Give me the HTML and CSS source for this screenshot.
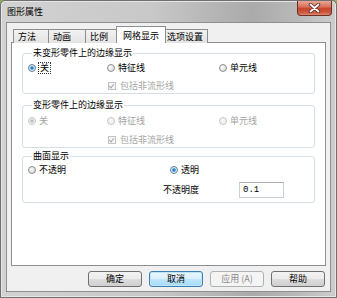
FILE: index.html
```html
<!DOCTYPE html>
<html lang="zh-CN">
<head>
<meta charset="utf-8">
<link rel="stylesheet" href="styles.css">
</head>
<body>
<div class="window">
  <div class="titlebar">
    <span class="title">图形属性</span>
    <span class="close">
      <svg width="13" height="10" viewBox="0 0 13 10"><path d="M2.5 1.5 L10.5 8.5 M10.5 1.5 L2.5 8.5" stroke="#5a2a22" stroke-width="3.4" stroke-linecap="round"/><path d="M2.5 1.5 L10.5 8.5 M10.5 1.5 L2.5 8.5" stroke="#ffffff" stroke-width="1.8" stroke-linecap="round"/></svg>
    </span>
  </div>
  <div class="client">
    <div class="tabs">
      <span class="tab">方法</span>
      <span class="tab t2">动画</span>
      <span class="tab t3">比例</span>
      <span class="tab active">网格显示</span>
      <span class="tab t5">选项设置</span>
    </div>
    <div class="panel">
      <fieldset class="group g1">
        <legend>未变形零件上的边缘显示</legend>
        <div class="opts">
          <label class="opt"><span class="radio checked"></span><span class="focus">关</span></label>
          <label class="opt"><span class="radio"></span>特征线</label>
          <label class="opt"><span class="radio"></span>单元线</label>
          <label class="opt dis chk-cell"><span class="check"></span>包括非流形线</label>
        </div>
      </fieldset>
      <fieldset class="group g2">
        <legend>变形零件上的边缘显示</legend>
        <div class="opts opts2">
          <label class="opt dis"><span class="radio dchecked"></span>关</label>
          <label class="opt dis"><span class="radio dradio"></span>特征线</label>
          <label class="opt dis"><span class="radio dradio"></span>单元线</label>
          <label class="opt dis chk-cell"><span class="check"></span>包括非流形线</label>
        </div>
      </fieldset>
      <fieldset class="group g3">
        <legend>曲面显示</legend>
        <div class="surf-row">
          <label class="opt op1"><span class="radio"></span>不透明</label>
          <label class="opt"><span class="radio checked"></span>透明</label>
        </div>
        <div class="surf-row row2">
          <span class="lbl">不透明度</span>
          <span class="input">0.1</span>
        </div>
      </fieldset>
    </div>
    <div class="buttons">
      <span class="btn">确定</span>
      <span class="btn focus-btn">取消</span>
      <span class="btn disabled">应用 (A)</span>
      <span class="btn">帮助</span>
    </div>
  </div>
</div>
</body>
</html>
```
FILE: styles.css
```css
html, body {
  margin: 0;
  padding: 0;
  background: #8fae5c;
}
body {
  width: 337px;
  height: 298px;
  overflow: hidden;
  font-family: "Noto Sans CJK SC", "Noto Sans", sans-serif;
  font-size: 9px;
  line-height: 10px;
  color: #000;
}
.window {
  box-sizing: border-box;
  width: 337px;
  height: 298px;
  border: 1px solid #6f6f6f;
  border-radius: 5px 5px 0 0;
  padding: 0 5px 5px 5px;
  background: linear-gradient(to right, #d2d2d2 0%, #c8c8c8 45%, #aaaaaa 75%, #b8b8b8 88%, #cdcdcd 100%);
  box-shadow: inset 0 0 0 1px #e6e6e6;
  display: flex;
  flex-direction: column;
}
.titlebar {
  height: 21px;
  display: flex;
  align-items: flex-start;
  justify-content: space-between;
  margin-right: -1px;
}
.title {
  margin-top: 6px;
  margin-left: 1px;
  color: #000;
}
.close {
  width: 35px;
  height: 15px;
  box-sizing: border-box;
  border: 1px solid #6e2f24;
  border-top: none;
  border-radius: 0 0 4px 4px;
  background: linear-gradient(#e9a898 0%, #d9735e 40%, #c3442b 55%, #cf5d45 85%, #e08a72 100%);
  display: flex;
  align-items: center;
  justify-content: center;
}
.client {
  flex: 1;
  border: 1px solid #8e8e8e;
  background: #f0f0f0;
  padding: 4px 4px 0 4px;
  display: flex;
  flex-direction: column;
}
.tabs {
  display: flex;
  align-items: flex-end;
  height: 16px;
  margin-left: 2px;
  margin-bottom: -1px;
  position: relative;
  z-index: 1;
}
.tab {
  box-sizing: border-box;
  height: 14px;
  padding: 1px 4px 0 4px;
  min-width: 35px;
  border: 1px solid #8c8e94;
  border-bottom: none;
  border-right: none;
  background: linear-gradient(#f2f2f2, #e3e3e3);
  line-height: 12px;
}
.t2 { min-width: 37px; }
.t3 { min-width: 33px; }
.t5 { min-width: 40px; border-right: 1px solid #8c8e94; padding-left: 3px; }
.active {
  height: 17px;
  margin: 0 -2px 0 -2px;
  padding: 3px 6px 0 6px;
  background: #ffffff;
  border-right: 1px solid #8c8e94;
  position: relative;
  z-index: 2;
}
.active + .tab { border-left: none; }
.panel {
  box-sizing: border-box;
  height: 224px;
  border: 1px solid #8c8e94;
  background: #ffffff;
  padding: 5px 10px 0 10px;
  display: flex;
  flex-direction: column;
}
.group {
  margin: 0;
  border: 1px solid #d5dfe5;
  border-radius: 3px;
  padding: 0 0 1px 5px;
  min-width: 0;
}
.group legend {
  padding: 0 1px;
  margin-left: 4px;
  line-height: 10px;
  height: 10px;
}
.g2 { margin-top: 6px; }
.g3 { margin-top: 3px; padding-bottom: 4px; }
.opts {
  display: grid;
  grid-template-columns: 79px 112px 1fr;
  row-gap: 6px;
  padding-top: 4px;
}
.opts2 { padding-top: 5px; row-gap: 7px; }
.opt {
  display: flex;
  align-items: center;
  height: 12px;
  gap: 3px;
  white-space: nowrap;
}
.chk-cell { grid-column: 2 / span 2; margin-left: 1px; gap: 4px; }
.dis { color: #a3a3a3; }
.radio {
  box-sizing: border-box;
  width: 8px;
  height: 8px;
  border-radius: 50%;
  border: 1px solid #8e8f8f;
  background: radial-gradient(circle at 40% 40%, #ffffff 0%, #e6e6e6 50%, #c9c9c9 100%);
  flex: none;
}
.radio.checked {
  border-color: #5d7fa0;
  background: radial-gradient(circle, #1e6ab8 0%, #3a8fd8 30%, #7fc0ee 42%, #e8eef2 55%, #d0d6da 100%);
}
.radio.dradio {
  border-color: #c6c6c6;
  background: #f2f2f2;
}
.radio.dchecked {
  border-color: #c6c6c6;
  background: radial-gradient(circle, #b8b8b8 0%, #c6c6c6 35%, #f4f4f4 48%, #f0f0f0 100%);
}
.focus {
  outline: 1px dotted #333;
  outline-offset: 0;
  padding: 0 1px;
}
.check {
  box-sizing: border-box;
  width: 8px;
  height: 8px;
  border: 1px solid #c3c3c3;
  background: #f6f6f6;
  position: relative;
  flex: none;
}
.check::after {
  content: "";
  position: absolute;
  left: 1px;
  top: 0px;
  width: 2px;
  height: 4px;
  border: solid #a8a8a8;
  border-width: 0 1px 1px 0;
  transform: rotate(40deg);
}
.surf-row {
  display: flex;
  align-items: center;
  height: 12px;
  padding-top: 3px;
}
.op1 { width: 142px; }
.row2 {
  height: 16px;
  padding-top: 6px;
}
.lbl { margin-left: 135px; width: 76px; }
.input {
  box-sizing: border-box;
  width: 45px;
  height: 16px;
  border: 1px solid #c9d0d6;
  border-top-color: #abadb3;
  background: #ffffff;
  padding: 2px 3px;
  font-family: "Liberation Mono", monospace;
  font-size: 9px;
  line-height: 11px;
}
.buttons {
  display: flex;
  justify-content: flex-end;
  gap: 7px;
  margin-top: 5px;
  padding-right: 1px;
}
.btn {
  box-sizing: border-box;
  width: 54px;
  height: 16px;
  border: 1px solid #707070;
  border-radius: 3px;
  background: linear-gradient(#f2f2f2 0%, #ebebeb 50%, #dddddd 51%, #cfcfcf 100%);
  text-align: center;
  line-height: 14px;
}
.focus-btn {
  border-color: #3c7fb1;
  box-shadow: inset 0 0 0 1px #bfe4f7;
  background: linear-gradient(#eaf6fd 0%, #d9f0fc 50%, #bee6fd 51%, #a7d9f5 100%);
}
.disabled {
  border-color: #adb2b5;
  background: #f4f4f4;
  color: #8a8a8a;
}
```
